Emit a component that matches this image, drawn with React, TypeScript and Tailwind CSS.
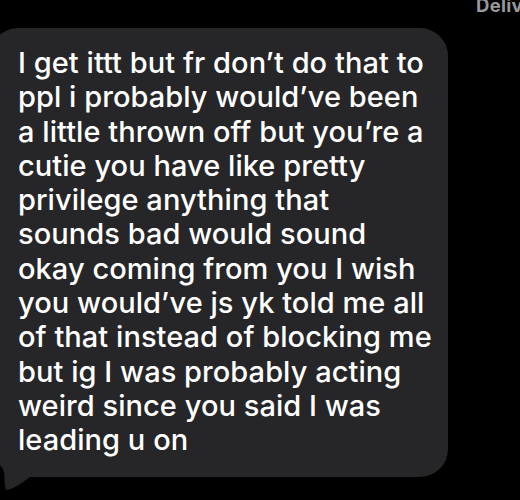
const lines = [
  'I get ittt but fr don’t do that to',
  'ppl i probably would’ve been',
  'a little thrown off but you’re a',
  'cutie you have like pretty',
  'privilege anything that',
  'sounds bad would sound',
  'okay coming from you I wish',
  'you would’ve js yk told me all',
  'of that instead of blocking me',
  'but ig I was probably acting',
  'weird since you said I was',
  'leading u on',
];

export default function App() {
  return (
    <div className="w-[520px] h-[500px] bg-black overflow-hidden font-['Inter',sans-serif]">
      <div className="h-[28px] pl-[476px] whitespace-nowrap overflow-hidden">
        <div className="text-[18.5px] font-bold text-[#97979c] leading-none -mt-[4px] tracking-[0.3px]">Delivered</div>
      </div>
      <div className="relative w-[458px] -ml-[10px]">
        <div className="bg-[#262628] rounded-[28px] rounded-bl-none pl-[28px] pr-4 pt-[18px] pb-[19px]">
          {lines.map((l) => (
            <div key={l} className="text-white text-[29px] leading-[34.3px] font-medium tracking-[0.05px] whitespace-nowrap">
              {l}
            </div>
          ))}
        </div>
        {/* tail at the bottom-left corner */}
        <svg className="absolute left-[10px] top-full -mt-[18px]" width="32" height="34" viewBox="0 0 32 34">
          <path d="M0 0 L0 18 L0 31 L6 31 C14 30 22 24 30 18 L30 0 Z" fill="#262628" />
          <path d="M0 6 C3 9 4.5 13 4.5 19 C4.5 24 5 28 6 31 L0 31 Z" fill="#000" />
        </svg>
      </div>
    </div>
  );
}
